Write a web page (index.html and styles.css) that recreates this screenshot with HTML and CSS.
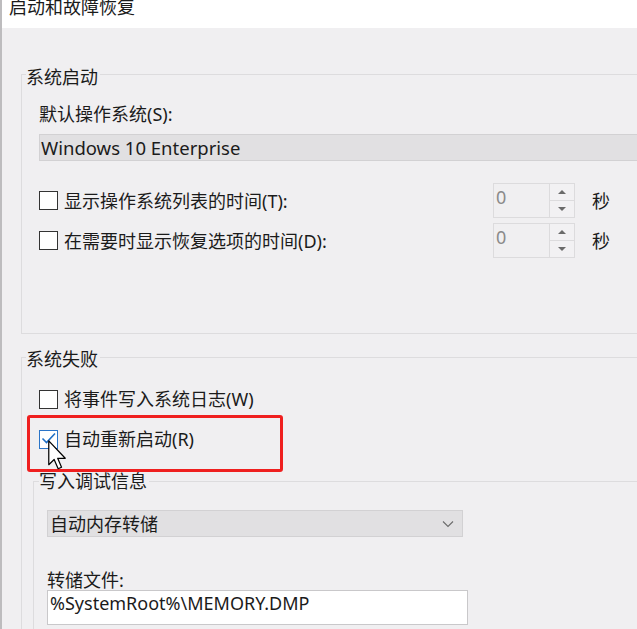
FILE: index.html
```html
<!DOCTYPE html>
<html lang="zh-CN">

<head>
    <meta charset="UTF-8">
    <meta name="viewport" content="width=device-width, initial-scale=1.0">
    <title>启动和故障恢复</title>
    <link rel="stylesheet" href="styles.css">
</head>

<body>
    <div class="window">
        <div class="title-bar">
            <span class="title">启动和故障恢复</span>
        </div>

        <div class="content">
            <!-- 系统启动 -->
            <div class="group group-start">
                <div class="legend">系统启动</div>
                <div class="field-label">默认操作系统(S):</div>
                <div class="combo combo-wide">Windows 10 Enterprise</div>

                <div class="check-row first-row">
                    <label class="check">
                        <span class="box"></span>
                        <span>显示操作系统列表的时间(T):</span>
                    </label>
                    <div class="spin">
                        <span class="spin-value">0</span>
                        <span class="spin-buttons">
                            <span class="spin-btn"><i class="arrow-up"></i></span>
                            <span class="spin-btn"><i class="arrow-down"></i></span>
                        </span>
                    </div>
                    <span class="unit">秒</span>
                </div>

                <div class="check-row">
                    <label class="check">
                        <span class="box"></span>
                        <span>在需要时显示恢复选项的时间(D):</span>
                    </label>
                    <div class="spin">
                        <span class="spin-value">0</span>
                        <span class="spin-buttons">
                            <span class="spin-btn"><i class="arrow-up"></i></span>
                            <span class="spin-btn"><i class="arrow-down"></i></span>
                        </span>
                    </div>
                    <span class="unit">秒</span>
                </div>
            </div>

            <!-- 系统失败 -->
            <div class="group group-fail">
                <div class="legend">系统失败</div>

                <div class="check-row row-log">
                    <label class="check">
                        <span class="box"></span>
                        <span>将事件写入系统日志(W)</span>
                    </label>
                </div>

                <div class="check-row row-restart">
                    <label class="check">
                        <span class="box checked">
                            <svg width="17" height="17" viewBox="0 0 17 17">
                                <polyline points="2.5,7.5 6.5,11.5 15,2.5" fill="none" stroke="#1f6fc5" stroke-width="1.6" />
                            </svg>
                        </span>
                        <span>自动重新启动(R)</span>
                    </label>
                </div>

                <div class="group group-debug">
                    <div class="legend legend-debug">写入调试信息</div>
                    <div class="combo combo-dump">
                        <span>自动内存转储</span>
                        <svg class="chevron" width="12" height="8" viewBox="0 0 12 8">
                            <polyline points="1,1.5 6,6.5 11,1.5" fill="none" stroke="#6b6b6b" stroke-width="1.1" />
                        </svg>
                    </div>
                    <div class="field-label dump-label">转储文件:</div>
                    <div class="text-input">%SystemRoot%\MEMORY.DMP</div>
                </div>
            </div>
        </div>
    </div>

    <!-- 红色标注框 + 鼠标 -->
    <div class="highlight"></div>
    <svg class="cursor" width="20" height="31" viewBox="0 0 13 20">
        <path d="M0.5,0.5 L0.5,16 L4,12.6 L6.6,18.6 L8.8,17.6 L6.3,11.8 L11.2,11.8 Z" fill="#fff" stroke="#000" stroke-width="0.8" stroke-linejoin="round" />
    </svg>
</body>

</html>
```

FILE: styles.css
```css
* {
    padding: 0;
    margin: 0;
    box-sizing: border-box;
}

body {
    position: relative;
    width: 637px;
    height: 629px;
    overflow: hidden;
    background-color: #f0eff1;
    font-family: "Noto Sans", "Noto Sans CJK SC", sans-serif;
    font-size: 18px;
    line-height: 20px;
    color: #1b1b1b;
}

.window {
    height: 629px;
    border-left: 2px solid #bdbcbe;
}

.title-bar {
    height: 28px;
    background-color: #fff;
    padding-left: 7px;
    overflow: hidden;
}

.title {
    display: block;
    margin-top: -3px;
    line-height: 18px;
    font-family: "Noto Sans CJK SC", sans-serif;
}

.content {
    padding-left: 19px;
}

.group {
    width: 760px;
    border: 1px solid #dddcde;
    border-right: none;
}

.legend {
    display: block;
    width: fit-content;
    height: 18px;
    line-height: 18px;
    padding-right: 2px;
    background-color: #f0eff1;
    font-family: "Noto Sans CJK SC", sans-serif;
}

.group-start {
    margin-top: 46px;
    padding: 0 0 75px 17px;
}

.group-start .legend {
    margin-top: -8px;
    margin-left: -13px;
}

.field-label {
    margin-top: 19px;
    line-height: 20px;
}

.combo {
    display: flex;
    align-items: center;
    height: 27px;
    background-color: #e1e0e2;
    border: 1px solid #d2d1d3;
}

.combo-wide {
    margin-top: 10px;
    padding-left: 1px;
    font-size: 18.5px;
}

.check-row {
    display: flex;
    align-items: center;
    margin-top: 5px;
}

.first-row {
    margin-top: 22px;
}

.check {
    display: flex;
    align-items: center;
    gap: 6px;
    width: 454px;
    line-height: 22px;
}

.box {
    display: flex;
    align-items: center;
    justify-content: center;
    width: 19px;
    height: 19px;
    border: 1.5px solid #333;
    background-color: #fff;
}

.box.checked {
    border-color: #2a74c8;
}

.spin {
    display: flex;
    width: 82px;
    height: 35px;
    border: 1px solid #dcdbdd;
}

.spin-value {
    flex: 1;
    padding-left: 2px;
    line-height: 26px;
    color: #8a8a8a;
}

.spin-buttons {
    display: flex;
    flex-direction: column;
    width: 25px;
    border-left: 1px solid #dcdbdd;
}

.spin-btn {
    flex: 1;
    display: flex;
    align-items: center;
    justify-content: center;
    background-color: #f2f1f3;
}

.spin-btn + .spin-btn {
    border-top: 1px solid #dcdbdd;
}

.arrow-up,
.arrow-down {
    width: 0;
    height: 0;
    border-left: 4px solid transparent;
    border-right: 4px solid transparent;
}

.arrow-up {
    border-bottom: 4px solid #6a6a6a;
}

.arrow-down {
    border-top: 4px solid #6a6a6a;
}

.unit {
    margin-left: 17px;
    line-height: 22px;
}

.group-fail {
    margin-top: 23px;
    padding: 0 0 0 17px;
    border-bottom: none;
    height: 300px;
}

.group-fail > .legend {
    margin-top: -9px;
    margin-left: -13px;
}

.row-log {
    margin-top: 21px;
}

.row-restart {
    margin-top: 18px;
}

.group-debug {
    margin-top: 31px;
    margin-left: -6px;
    padding-left: 13px;
    height: 200px;
    border-bottom: none;
}

.legend-debug {
    margin-top: -11px;
    margin-left: -8px;
}

.combo-dump {
    justify-content: space-between;
    width: 416px;
    margin-top: 21px;
    padding: 0 8px 0 2px;
}

.dump-label {
    margin-top: 33px;
}

.text-input {
    width: 421px;
    height: 35px;
    padding: 1px 2px 0;
    line-height: 22px;
    font-size: 18px;
    background-color: #fff;
    border: 1px solid #c9c8ca;
}

.highlight {
    position: absolute;
    left: 27px;
    top: 415px;
    width: 256px;
    height: 57px;
    border: 3px solid #ef1f1f;
    border-radius: 3px;
}

.cursor {
    position: absolute;
    left: 48px;
    top: 440px;
}
```
